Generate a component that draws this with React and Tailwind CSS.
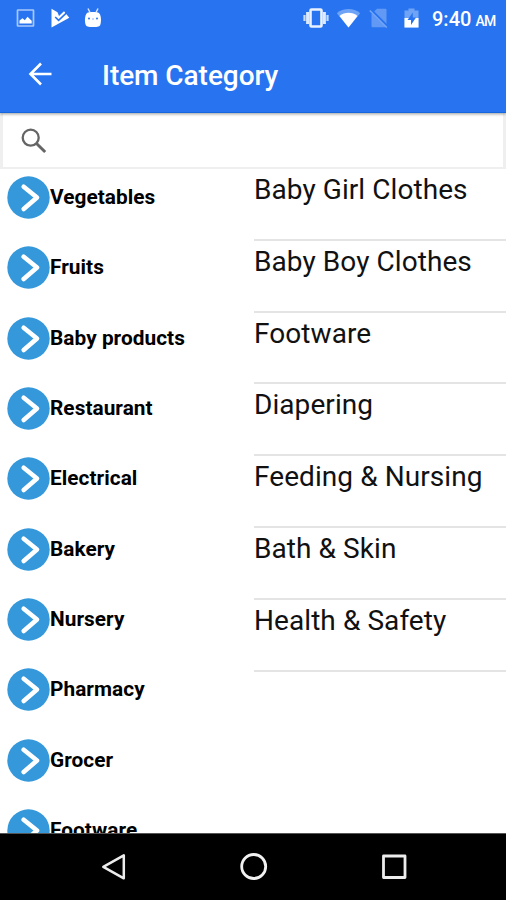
/* ============================================================
   ITEM CATEGORY: category list on the left, sub categories on the right.
============================================================ */
import React from 'react';

const CATEGORIES = [
    'Vegetables',
    'Fruits',
    'Baby products',
    'Restaurant',
    'Electrical',
    'Bakery',
    'Nursery',
    'Pharmacy',
    'Grocer',
    'Footware',
];

const SUB_CATEGORIES = [
    'Baby Girl Clothes',
    'Baby Boy Clothes',
    'Footware',
    'Diapering',
    'Feeding & Nursing',
    'Bath & Skin',
    'Health & Safety',
];

export default function App() {
    return (
        <div className="flex h-[900px] w-[506px] flex-col overflow-hidden bg-white font-[Roboto,sans-serif] text-black">
            <header className="z-10 h-[113px] shrink-0 border-b border-[#1567df] bg-[#2874f0] text-white shadow-[0_1px_3px_rgba(0,0,0,0.4)]">
                <StatusBar />
                <div className="flex h-[78px] items-center pt-[2px] pl-[28px]">
                    <BackIcon />
                    <h1 className="ml-[50px] pt-px text-[28px] leading-8 font-medium tracking-[-0.05px]">Item Category</h1>
                </div>
            </header>

            {/* Search */}
            <div className="flex h-[56px] shrink-0 items-center border-x-[3px] border-b-2 border-[#efefef] pl-[18px]">
                <SearchIcon />
            </div>

            <main className="flex min-h-0 flex-1 overflow-hidden">
                <ul className="w-[254px] shrink-0 pt-[7px] pl-[7px]">
                    {CATEGORIES.map((name) => (
                        <li key={name} className="flex h-[70.35px] items-start">
                            <ArrowBadge />
                            <span className="text-[20.8px] leading-[43px] font-bold tracking-[0.05px]">{name}</span>
                        </li>
                    ))}
                </ul>
                <ul className="flex-1">
                    {SUB_CATEGORIES.map((name) => (
                        <li key={name} className="h-[71.8px] border-b-2 border-[#e4e4e4] text-[28px] leading-[42px] tracking-[0.07px] whitespace-nowrap text-[#111]">
                            {name}
                        </li>
                    ))}
                </ul>
            </main>

            <NavBar />
        </div>
    );
}

const StatusBar = () => (
    <div className="flex h-[35px] items-center">
        {/* Notifications */}
        <svg className="ml-[16px] h-[20px] w-[19px]" viewBox="0 0 19 20" fill="none">
            <rect x="1.5" y="2" width="16" height="16" rx="0.5" stroke="#a9c8fa" strokeWidth="1.7" />
            <path d="M3.5 15.5v-3l3-2.3 2.3 2 2.7-3.4 4.2 4v2.7z" fill="#fff" />
        </svg>
        <svg className="ml-[16px] h-[20px] w-[19px]" viewBox="0 0 19 20">
            <path d="M.5.8 6.500 4.200 8 8 13 3.200l1.600 2L18.300 9.800.5 19.500z" fill="#fff" />
            <path d="m4.200 9 3.400 3.400L15.500 4.800" fill="none" stroke="#2874f0" strokeWidth="1.600" />
        </svg>
        <svg className="ml-[14px] h-[20px] w-[18px]" viewBox="0 0 18 20">
            <path d="m4 .5 2 4M14 .5l-2 4" stroke="#dbe8fd" strokeWidth="1.4" />
            <path d="M3 5C5 3.600 13 3.600 15 5c2 2 2.600 7.500 1.400 11.500-.6 2-2.400 2.500-7.400 2.500s-6.800-.5-7.400-2.500C.4 12.500 1 7 3 5z" fill="#fff" />
            <circle cx="5" cy="10.500" r="1" fill="#2874f0" />
            <circle cx="13" cy="10.500" r="1" fill="#2874f0" />
            <path d="M8 11h2" stroke="#8db7f8" />
        </svg>

        {/* System */}
        <svg className="ml-[201px] h-[20px] w-[26px]" viewBox="0 0 26 20" fill="none">
            <rect x="7.500" y="1.500" width="11" height="17" rx="1" stroke="#eaf2ff" strokeWidth="2.600" />
            <path d="M4.600 4v12M21.400 4v12" stroke="#dce9ff" strokeWidth="3" />
            <path d="M1.500 7v6M24.500 7v6" stroke="#c7dcfd" strokeWidth="2.200" />
        </svg>
        <svg className="ml-[7px] h-[20px] w-[25px]" viewBox="0 0 25 20">
            <path d="M.8 5.200C7.500-.3 17.500-.3 24.200 5.200L12.500 19.500z" fill="#6ea3f6" />
            <path d="M3.500 8c5-4.300 13-4.300 18 0l-9 11.500z" fill="#fff" />
        </svg>
        <svg className="ml-[8px] h-[20px] w-[20px]" viewBox="0 0 20 20">
            <path d="M8 .7h8.500q1 0 1 1v16.600q0 1-1 1h-13q-1 0-1-1V6z" fill="#6199f5" />
            <path d="m1.500 1.700 17 17" stroke="#2874f0" strokeWidth="3" />
            <path d="m.8 2.500 17 17" stroke="#74a7f7" strokeWidth="1.500" />
        </svg>
        <svg className="ml-[15px] h-[20px] w-[15px]" viewBox="0 0 15 20">
            <path d="M.5 2.500H4.500V.5h6v2h4v17H.500z" fill="#6ea3f6" />
            <path d="M.5 10h14v9.500H.5z" fill="#fff" />
            <path d="M8.800 4.500 3.500 12H7v5l5-7.500H8.800z" fill="#2874f0" />
        </svg>
        <div className="ml-[13px] flex items-baseline pt-[3px] whitespace-nowrap">
            <span className="text-[20px] leading-6 font-medium">9:40</span>
            <span className="ml-[4px] text-[14px] font-medium tracking-[-0.6px]">AM</span>
        </div>
    </div>
);

const BackIcon = () => (
    <svg className="h-[24px] w-[24px] -translate-y-px" viewBox="0 0 24 24" fill="none" stroke="#fff" strokeWidth="2.600">
        <path d="M13 1.500 2.500 12 13 22.500M2.500 12H23.500" />
    </svg>
);

const SearchIcon = () => (
    <svg className="mt-px h-[26px] w-[26px]" viewBox="0 0 26 26" fill="none" stroke="#656565">
        <circle cx="9.700" cy="9.700" r="8" strokeWidth="2.300" />
        <path d="m15.500 15.500 8.700 8.500" strokeWidth="3" />
    </svg>
);

const ArrowBadge = () => (
    <svg className="h-[43px] w-[43px] shrink-0" viewBox="0 0 43 43" fill="none">
        <circle cx="21.500" cy="21.500" r="21.200" fill="#3498db" />
        <path d="M16.700 10.700 30 21.500 16.700 33" stroke="#fff" strokeWidth="4.600" strokeLinecap="round" strokeLinejoin="round" />
    </svg>
);

/* Android system buttons */
const NavBar = () => (
    <nav className="flex h-[67px] shrink-0 items-center justify-between border-t border-[#555] bg-black pr-[98px] pl-[100px]">
        <svg className="h-[28px] w-[28px]" viewBox="0 0 28 28" fill="none" stroke="#ececec" strokeWidth="2.500" strokeLinejoin="round">
            <path d="M23.800 2.300v23L3.300 13.800z" />
        </svg>
        <svg className="h-[28px] w-[28px]" viewBox="0 0 28 28" fill="none" stroke="#f2f2f2" strokeWidth="2.800">
            <circle cx="13.700" cy="13.500" r="12" />
        </svg>
        <svg className="h-[28px] w-[28px]" viewBox="0 0 28 28" fill="none" stroke="#ececec" strokeWidth="2.800" strokeLinejoin="round">
            <rect x="3.500" y="3" width="21.500" height="21.500" />
        </svg>
    </nav>
);
